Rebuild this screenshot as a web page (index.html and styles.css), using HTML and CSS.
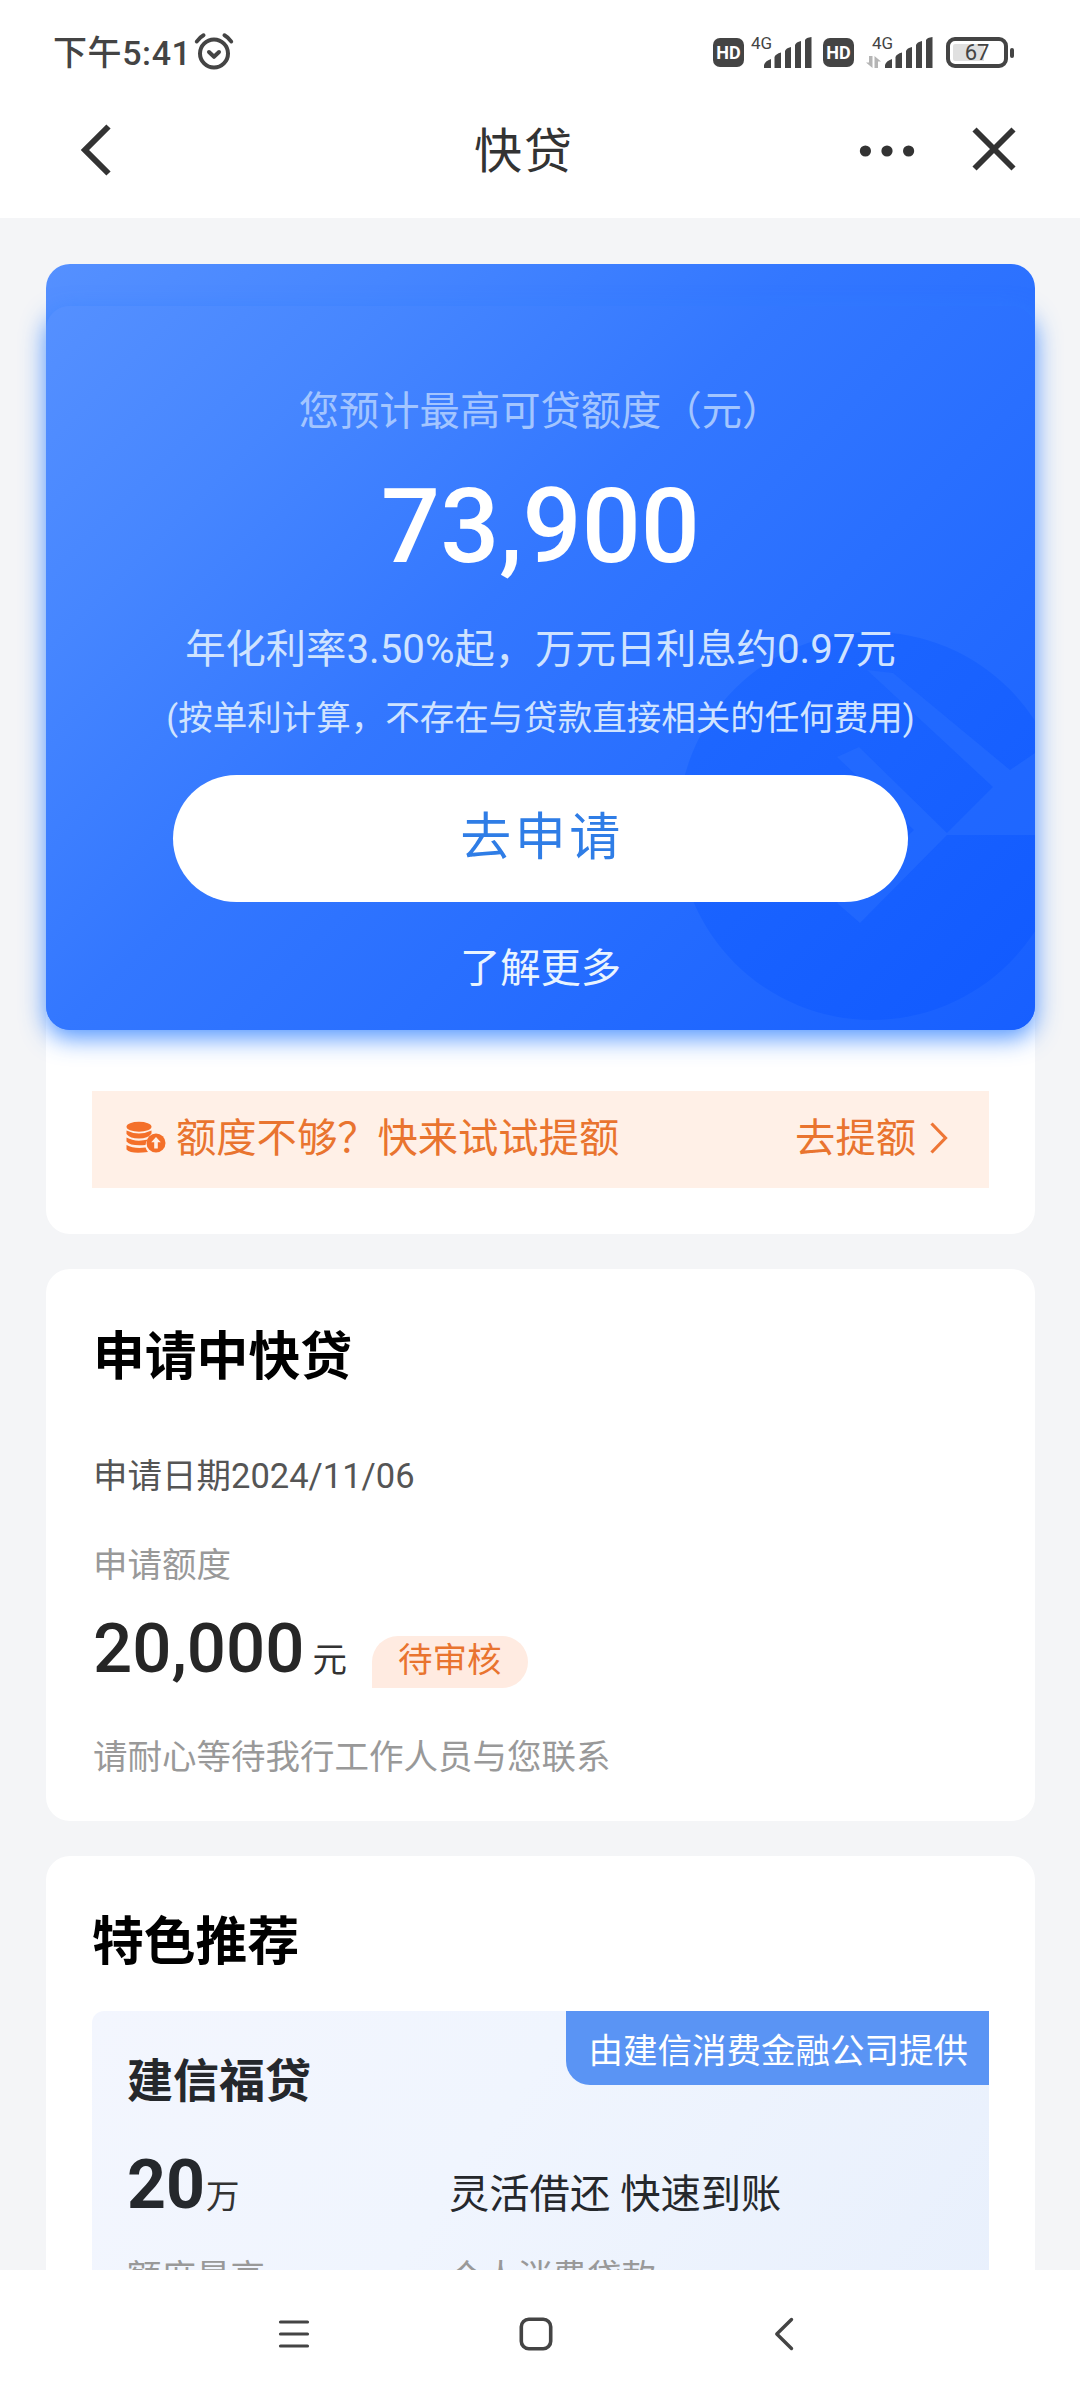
FILE: index.html
```html
<!DOCTYPE html>
<html lang="zh-CN">
<head>
<meta charset="utf-8">
<title>快贷</title>
<link rel="stylesheet" href="styles.css">
</head>
<body>
<div class="screen">
  <header class="top">
    <div class="status">
      <div class="status-left">
        <span class="clock">下午5:41</span>
        <svg class="alarm" width="40" height="40" viewBox="0 0 40 40" fill="none" stroke="#444" stroke-linecap="round" stroke-linejoin="round">
          <circle cx="20" cy="21.500" r="14" stroke-width="4"/>
          <path d="M15 20l5 4.800 5-4.800" stroke-width="4"/>
          <path d="M2.800 9.500Q5.500 5.500 9.500 3.300M37.200 9.500Q34.500 5.500 30.500 3.300" stroke-width="4"/>
        </svg>
      </div>
      <div class="status-right">
        <span class="hd">HD</span>
        <div class="signal signal-a">
          <span class="net">4G</span>
          <svg width="49" height="32" viewBox="0 0 49 32" fill="#444"><path d="M0 31v-3q1-4 7-6v9zM10.500 31V20q1-3 6.500-4.500V31zM21 31V14q1-3 6-4v21zM31 31V8q1-3 6-4v27zM41 31V3q1-2.500 6.500-3v31z"/></svg>
        </div>
        <span class="hd">HD</span>
        <div class="signal signal-b">
          <span class="net">4G</span>
          <svg class="arrows" width="15" height="12" viewBox="0 0 15 12" fill="#b5b5b5"><path d="M3 0h3.500v12L0 6.500h3zM8.500 0L15 5.500h-3V12H8.500z"/></svg>
          <svg width="49" height="32" viewBox="0 0 49 32" fill="#444"><path d="M0 31v-3q1-4 7-6v9zM10.500 31V20q1-3 6.500-4.500V31zM21 31V14q1-3 6-4v21zM31 31V8q1-3 6-4v27zM41 31V3q1-2.500 6.500-3v31z"/></svg>
        </div>
        <div class="battery"><span class="battery-body">67</span><span class="battery-tip"></span></div>
      </div>
    </div>
    <div class="titlebar">
      <svg class="back" width="32" height="52" viewBox="0 0 32 52" fill="none" stroke="#333" stroke-width="6"><path d="M28.500 2.500L5 26l23.500 23.500"/></svg>
      <h1 class="page-title">快贷</h1>
      <svg class="dots" width="56" height="12" viewBox="0 0 56 12" fill="#333"><circle cx="6.400" cy="6" r="5.600"/><circle cx="28" cy="6" r="5.600"/><circle cx="49.600" cy="6" r="5.600"/></svg>
      <svg class="close" width="44" height="44" viewBox="0 0 44 44" fill="none" stroke="#333" stroke-width="5.800"><path d="M2.500 2.500l39 39M41.500 2.500l-39 39"/></svg>
    </div>
  </header>

  <main class="content">
    <section class="card offer">
      <div class="hero">
        <div class="hero-inner">
          <svg class="emblem" width="357" height="400" viewBox="0 0 357 400">
            <defs>
              <linearGradient id="disc" x1="0" y1="0" x2="1" y2="1"><stop offset="0" stop-color="#2069ff"/><stop offset="1" stop-color="#1059ff"/></linearGradient>
            </defs>
            <circle cx="194" cy="200" r="194" fill="url(#disc)"/>
            <path d="M189 44L215 47L332 144L357 127V209H269L182 297L159 277L236 204L159 131L181 121L269 207L315 161Z" fill="#2a70ff" opacity=".5"/>
          </svg>
          <p class="hero-label">您预计最高可贷额度（元）</p>
          <p class="hero-amount">73,900</p>
          <p class="hero-rate">年化利率3.50%起，万元日利息约0.97元</p>
          <p class="hero-note">(按单利计算，不存在与贷款直接相关的任何费用)</p>
          <a class="apply">去申请</a>
          <a class="more">了解更多</a>
        </div>
      </div>
      <div class="raise">
        <svg class="coins" width="40" height="34" viewBox="0 0 40 34" fill="#f4702a">
          <ellipse cx="13" cy="5.800" rx="12.500" ry="5"/>
          <path d="M.5 9.500Q13 15.500 25.500 9.500V12.500Q22 17.500 13 17.500T.5 13ZM.5 16.500Q9 21.500 22 18.500Q19.800 20.500 19.500 24Q5 25.500 .5 20.500ZM.5 24Q8 28 19.600 26.500Q20.500 29.500 22 31Q5 33.500 .5 28.500Z"/>
          <circle cx="30" cy="22" r="9.500"/>
          <path d="M30 16l-4.800 5.300h3V27.500h3.600v-6.200h3z" fill="#fff0e7"/>
        </svg>
        <span class="raise-text">额度不够？快来试试提额</span>
        <span class="raise-link">去提额</span>
        <svg class="chev" width="18" height="32" viewBox="0 0 18 32" fill="none" stroke="#ee7636" stroke-width="3.200"><path d="M1.500 1.500L15.500 16L1.500 30.500"/></svg>
      </div>
    </section>

    <section class="card pending">
      <h2 class="card-title">申请中快贷</h2>
      <p class="date">申请日期2024/11/06</p>
      <p class="label">申请额度</p>
      <div class="sum-row">
        <span class="sum">20,000</span><span class="unit">元</span><span class="tag">待审核</span>
      </div>
      <p class="wait">请耐心等待我行工作人员与您联系</p>
    </section>

    <section class="card featured">
      <h2 class="card-title">特色推荐</h2>
      <div class="product">
        <span class="provider">由建信消费金融公司提供</span>
        <h3 class="product-name">建信福贷</h3>
        <div class="facts">
          <div class="quota"><span class="quota-num">20</span><span class="quota-unit">万</span></div>
          <div class="slogan">灵活借还 快速到账</div>
          <div class="fact-label">额度最高</div>
          <div class="fact-label">个人消费贷款</div>
        </div>
      </div>
    </section>
  </main>

  <nav class="sysnav">
    <svg width="32" height="34" viewBox="0 0 32 34" fill="none" stroke="#444" stroke-width="3.200" stroke-linecap="round"><path d="M2.500 5h27M2.500 17h27M2.500 29h27"/></svg>
    <svg width="34" height="34" viewBox="0 0 34 34" fill="none" stroke="#444" stroke-width="3.600"><rect x="2.300" y="2.300" width="29.400" height="29.400" rx="7.500"/></svg>
    <svg width="20" height="34" viewBox="0 0 20 34" fill="none" stroke="#444" stroke-width="3.400" stroke-linecap="round" stroke-linejoin="round"><path d="M17.500 2.500L2.800 17l14.700 14.500"/></svg>
  </nav>
</div>
</body>
</html>
```
FILE: styles.css
```css
* { box-sizing: border-box; margin: 0; padding: 0; }
body {
  background: #fff;
  font-family: Roboto, "Noto Sans CJK SC", sans-serif;
  color: #222;
}
svg { display: block; flex: none; }
.screen {
  width: 1080px;
  height: 2400px;
  display: flex;
  flex-direction: column;
  overflow: hidden;
  background: #fff;
}

/* status and title bars */
.top { flex: none; height: 218px; }
.status {
  height: 84px;
  padding: 32px 66px 0 53px;
  display: flex;
  justify-content: space-between;
  align-items: flex-start;
}
.status-left, .status-right { display: flex; align-items: flex-start; }
.clock {
  width: 141px;
  font-size: 34px;
  line-height: 42px;
  font-weight: 500;
  letter-spacing: .6px;
  color: #444;
  white-space: nowrap;
}
.hd {
  width: 31px;
  height: 29px;
  margin-top: 6px;
  border-radius: 7px;
  background: #444;
  color: #fff;
  font-size: 18px;
  font-weight: 700;
  line-height: 29px;
  text-align: center;
}
.signal { display: flex; align-items: flex-start; padding-top: 5px; }
.signal-a { width: 79px; padding-left: 7px; }
.signal-b { width: 92px; padding-left: 18px; }
.net {
  width: 22px;
  margin-right: -9px;
  margin-top: -2px;
  font-size: 17px;
  line-height: 17px;
  color: #444;
}
.signal-b .net { margin-right: 0; }
.signal-b .arrows { margin: 19px 4px 0 -28px; }
.battery { display: flex; align-items: center; gap: 2px; margin-top: 5px; }
.battery-body {
  width: 62px;
  height: 31px;
  border: 4px solid #444;
  border-radius: 9px;
  background: linear-gradient(90deg, #e0e0e0 34px, #fff 34px) padding-box;
  box-shadow: inset 0 0 0 3px #fff;
  font-size: 22px;
  line-height: 24px;
  text-align: center;
  color: #444;
}
.battery-tip { width: 4px; height: 10px; border-radius: 2px; background: #444; }
.titlebar { height: 134px; padding-left: 80px; display: flex; align-items: center; }
.back { margin-top: -3px; }
.page-title {
  width: 100px;
  margin-left: 362px;
  padding-top: 2px;
  font-size: 48px;
  line-height: 60px;
  font-weight: 400;
  letter-spacing: 2px;
  color: #333;
  white-space: nowrap;
}
.dots { margin-left: 285px; }
.close { margin: -4px 0 0 57px; }

.content {
  flex: none;
  height: 2052px;
  padding: 46px 45px 0 46px;
  background: #f4f5f7;
  overflow: hidden;
}
.card { background: #fff; border-radius: 24px; }

/* loan offer */
.offer { height: 970px; }
.hero, .hero-inner {
  border-radius: 24px;
  background: linear-gradient(135deg, #5590ff 0%, #4686ff 20%, #3377ff 43%, #246bff 72%, #175fff 100%);
}
.hero { height: 766px; padding-top: 42px; }
.hero-inner {
  position: relative;
  height: 724px;
  padding-top: 76px;
  display: flex;
  flex-direction: column;
  align-items: center;
  box-shadow: 0 8px 24px rgba(50, 130, 255, .85);
}
.emblem {
  position: absolute;
  right: 0;
  bottom: 4px;
}
.hero-inner > :not(.emblem) { position: relative; }
.hero-label { font-size: 40.3px; line-height: 60px; color: #a3c5ff; }
.hero-amount { margin-top: 35px; font-size: 104px; line-height: 100px; font-weight: 500; color: #fff; }
.hero-rate { margin-top: 43px; font-size: 40.3px; line-height: 60px; color: #cfe3ff; }
.hero-note { margin-top: 13px; font-size: 34.5px; line-height: 50px; color: #cfe3ff; }
.apply {
  width: 735px;
  height: 127px;
  margin-top: 32px;
  padding-left: 3px;
  border-radius: 64px;
  background: #fff;
  color: #2f7de6;
  font-size: 51px;
  line-height: 126px;
  letter-spacing: 3.500px;
  text-align: center;
}
.more { margin-top: 37px; font-size: 40.3px; line-height: 60px; color: #e9f4ff; }
.raise {
  height: 97px;
  margin: 61px 46px 0;
  padding: 0 41px 2px 34px;
  display: flex;
  align-items: center;
  background: #fff0e7;
  font-size: 40.3px;
  line-height: 60px;
  color: #e9742f;
}
.raise-text { flex: 1; margin-left: 10px; }
.raise-link { margin-right: 14px; }
.coins, .chev { margin-top: -1px; }

/* pending application */
.pending { height: 552px; margin-top: 35px; padding: 54px 47px 0; }
.card-title { font-size: 51.800px; line-height: 70px; font-weight: 700; color: #000; }
.date { margin-top: 58px; font-size: 34.5px; line-height: 50px; color: #555; }
.label { margin-top: 39px; font-size: 34.5px; line-height: 50px; color: #999; }
.sum-row { height: 80px; margin-top: 19px; display: flex; align-items: baseline; }
.sum { font-size: 69px; line-height: 80px; font-weight: 500; color: #262626; }
.unit { margin-left: 8px; font-size: 34.5px; color: #333; }
.tag {
  margin-left: 25px;
  padding: 0 26px 4px;
  border-radius: 26px 26px 26px 0;
  background: #ffebe1;
  color: #e9742f;
  font-size: 34.5px;
  line-height: 48px;
}
.wait { margin-top: 43px; font-size: 34.5px; line-height: 50px; color: #999; }

/* featured product */
.featured { height: 560px; margin-top: 35px; padding: 52px 46px 0; }
.product {
  position: relative;
  height: 440px;
  margin-top: 33px;
  padding: 40px 0 0 35px;
  border-radius: 12px 0 0 0;
  background: linear-gradient(125deg, #f3f6fe 0%, #f0f5fe 40%, #e7effc 100%);
}
.provider {
  position: absolute;
  top: 0;
  right: 0;
  height: 74px;
  padding: 0 21px 0 23px;
  border-radius: 0 0 0 24px;
  background: #5a94f4;
  color: #fff;
  font-size: 34.5px;
  line-height: 80px;
}
.product-name { font-size: 46px; line-height: 60px; font-weight: 700; color: #25282c; }
.facts { margin-top: 34px; display: grid; grid-template-columns: 322px 1fr; align-items: baseline; }
.quota-num { font-size: 68px; line-height: 80px; font-weight: 700; color: #25282c; }
.quota-unit { margin-left: 1px; font-size: 33.5px; color: #333; }
.slogan { font-size: 40.3px; color: #25282c; }
.fact-label { margin-top: 32px; font-size: 34.5px; line-height: 40px; color: #999; }

/* system navigation */
.sysnav { height: 130px; padding: 47px 286px 0 278px; display: flex; justify-content: space-between; }
.sysnav svg:nth-child(2) { margin-right: 12px; }
```
